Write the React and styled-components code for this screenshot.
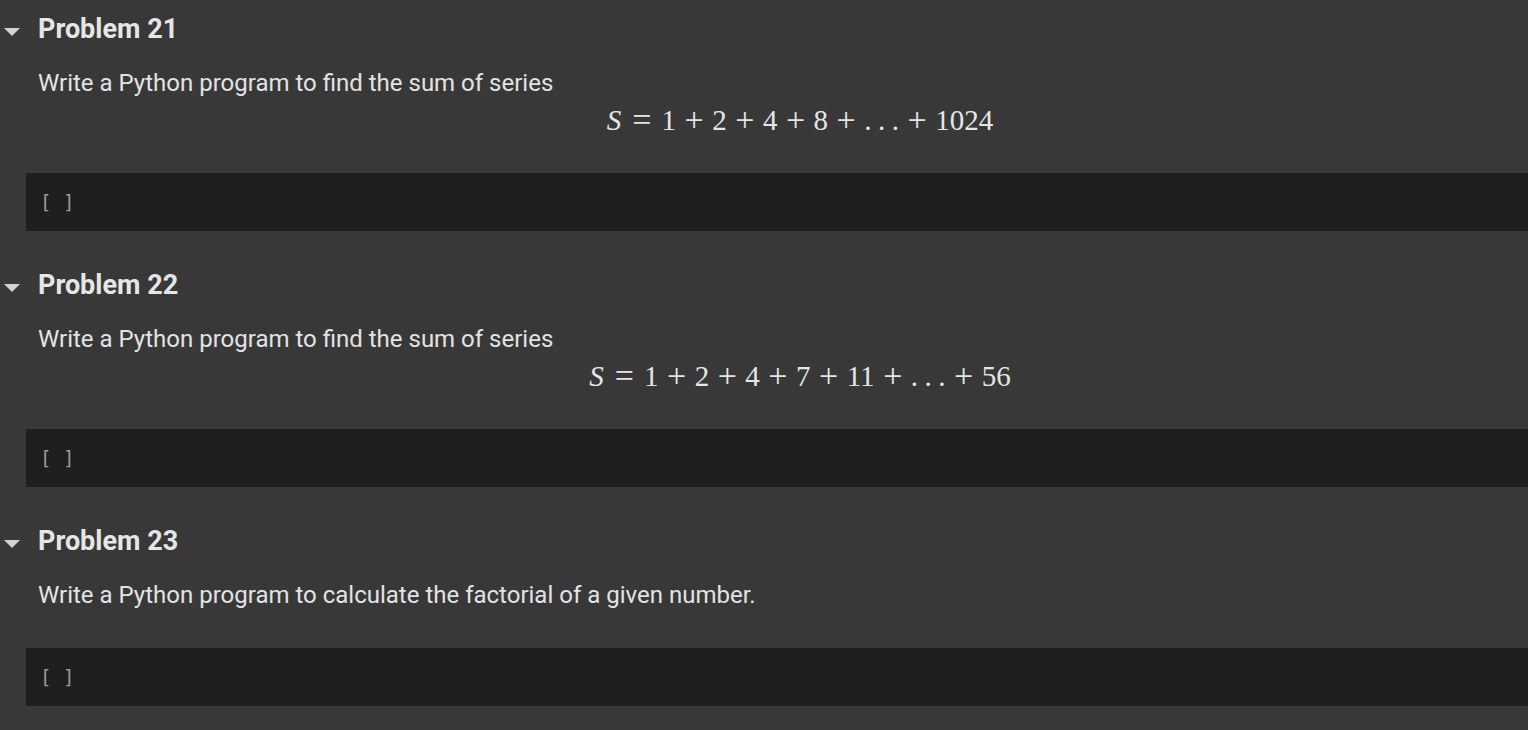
import React from "react";
import styled, { createGlobalStyle } from "styled-components";

const Global = createGlobalStyle`
  html, body { margin: 0; padding: 0; background: #383838; }
  body { font-family: Roboto, "Noto Sans", sans-serif; color: #e3e3e3; overflow: hidden; }
`;

const Notebook = styled.main`
  display: flex;
  flex-direction: column;
  width: 1528px;
  min-height: 730px;
  background: #383838;
`;

const Section = styled.section`
  display: flex;
  flex-direction: column;
  padding-top: 13px;
`;

const HeadingRow = styled.div`
  display: flex;
  align-items: center;
  height: 32px;
  padding-left: 4px;
  gap: 18px;
`;

const Caret = styled.svg`
  width: 16px;
  height: 8px;
  margin-top: 5px;
  flex: none;
`;

const Heading = styled.h2`
  margin: 0;
  font-family: Roboto, "Noto Sans", sans-serif;
  font-weight: 700;
  font-size: 27px;
  line-height: 32px;
  color: #e6e6e6;
`;

const Markdown = styled.div`
  display: flex;
  flex-direction: column;
  padding: 23px 0 33px 38px;
`;

const Para = styled.p`
  margin: 0;
  font-size: 24px;
  line-height: 30px;
  color: #e3e3e3;
  &:last-child { margin-bottom: 5px; }
`;

const MathBlock = styled.div`
  margin-top: 2px;
  height: 40px;
  line-height: 40px;
  text-align: center;
  padding-left: 34px;
  font-family: "Liberation Serif", "Times New Roman", serif;
  font-size: 29px;
  color: #e6e6e6;
  white-space: nowrap;
`;

const Var = styled.span`
  font-style: italic;
  margin-right: 1px;
`;

const Rel = styled.span`
  font-size: 34px;
  line-height: 0;
  vertical-align: -1px;
  margin: 0 10px;
`;

const Bin = styled.span`
  font-size: 34px;
  line-height: 0;
  vertical-align: -1px;
  margin: 0 8.5px;
`;

const Dots = styled.span`
  letter-spacing: 6.5px;
  margin-right: -6.5px;
`;

const CodeCell = styled.div`
  margin-left: 26px;
  margin-bottom: 25px;
  height: 58px;
  background: #1f1f1f;
  display: flex;
  align-items: center;
  padding-left: 14px;
`;

const RunBracket = styled.span`
  font-family: "DejaVu Sans Mono", "Liberation Mono", monospace;
  font-size: 19px;
  color: #9a9a9a;
  white-space: pre;
`;

function Formula({ terms, last }) {
  const parts = [];
  terms.forEach((t, i) => {
    parts.push(<span key={"t" + i}>{t}</span>);
    parts.push(<Bin key={"b" + i}>+</Bin>);
  });
  return (
    <MathBlock>
      <Var>S</Var>
      <Rel>=</Rel>
      {parts}
      <Dots>...</Dots>
      <Bin>+</Bin>
      <span>{last}</span>
    </MathBlock>
  );
}

const problems = [
  { n: 21, text: "Write a Python program to find the sum of series", math: { terms: ["1", "2", "4", "8"], last: "1024" } },
  { n: 22, text: "Write a Python program to find the sum of series", math: { terms: ["1", "2", "4", "7", "11"], last: "56" } },
  { n: 23, text: "Write a Python program to calculate the factorial of a given number." },
];

export default function App() {
  return (
    <>
      <Global />
      <Notebook>
        {problems.map((p) => (
          <Section key={p.n}>
            <HeadingRow>
              <Caret viewBox="0 0 16 8">
                <polygon points="0,0 16,0 8,8" fill="#d2d2d2" />
              </Caret>
              <Heading>Problem {p.n}</Heading>
            </HeadingRow>
            <Markdown>
              <Para>{p.text}</Para>
              {p.math && <Formula terms={p.math.terms} last={p.math.last} />}
            </Markdown>
            <CodeCell>
              <RunBracket>[ ]</RunBracket>
            </CodeCell>
          </Section>
        ))}
      </Notebook>
    </>
  );
}
